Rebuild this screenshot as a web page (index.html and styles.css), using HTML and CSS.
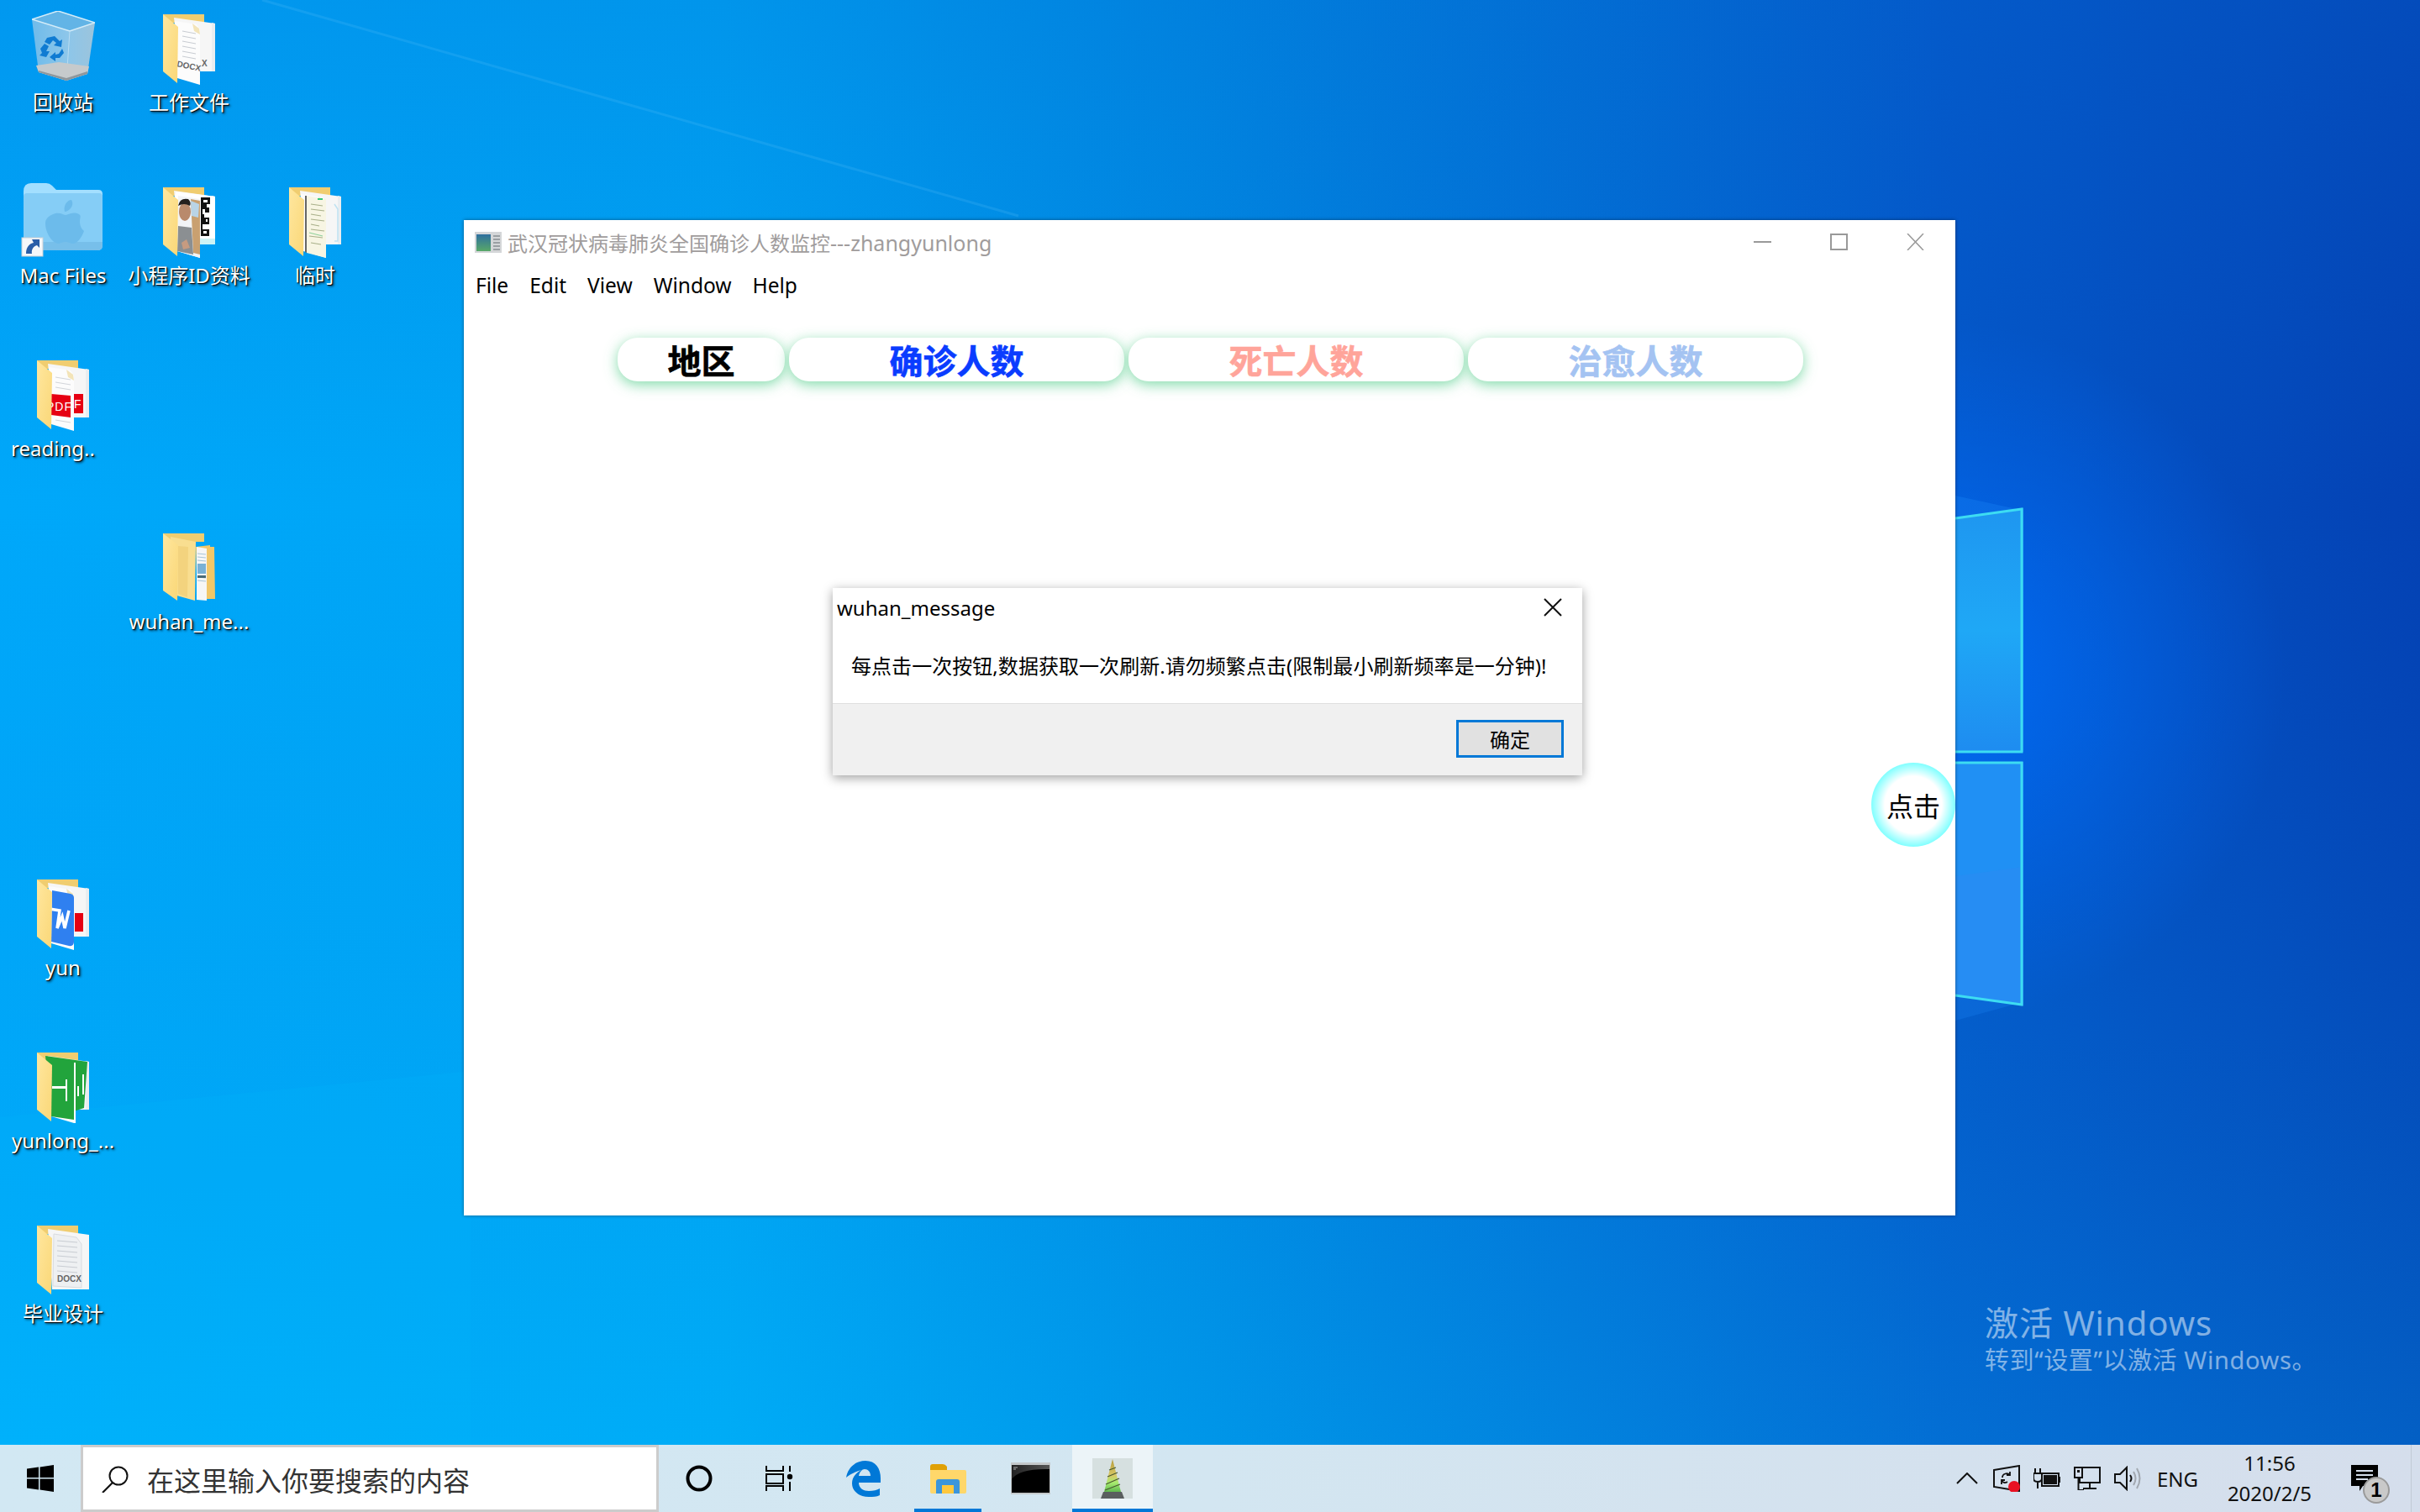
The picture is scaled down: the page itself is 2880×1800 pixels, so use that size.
FILE: index.html
```html
<!DOCTYPE html>
<html>
<head>
    <title>Desktop</title>
    <link rel="stylesheet" href="styles.css">
</head>
<body>
    <!-- shared folder parts -->
    <svg class="defs" width="0" height="0">
        <defs>
            <linearGradient id="flap" x1="0" y1="0" x2="1" y2="1">
                <stop offset="0" stop-color="#ffe79f"/>
                <stop offset="1" stop-color="#fad777"/>
            </linearGradient>
            <linearGradient id="binBody" x1="0" y1="0" x2="1" y2="0">
                <stop offset="0" stop-color="#6fbbea"/>
                <stop offset="0.55" stop-color="#8cc6ea"/>
                <stop offset="1" stop-color="#9cc4dc"/>
            </linearGradient>
            <linearGradient id="consoleFill" x1="0" y1="0" x2="1" y2="0">
                <stop offset="0" stop-color="#222"/>
                <stop offset="1" stop-color="#555"/>
            </linearGradient>
            <linearGradient id="coneFill" x1="0" y1="0" x2="0" y2="1">
                <stop offset="0" stop-color="#b59a3a"/>
                <stop offset="0.5" stop-color="#d8c865"/>
                <stop offset="0.72" stop-color="#a8ec70"/>
                <stop offset="1" stop-color="#5fb850"/>
            </linearGradient>
            <linearGradient id="titleChart" x1="0" y1="0" x2="0" y2="1">
                <stop offset="0" stop-color="#2f6f9f"/>
                <stop offset="1" stop-color="#58a868"/>
            </linearGradient>
            <symbol id="folderBack" viewBox="0 0 62 84">
                <path d="M0 0H49V10H0Z" fill="#f0cd70"/>
                <path d="M13 4L62 11V68L20 68Z" fill="#f6f6f6"/>
                <path d="M62 11V68H58V10Z" fill="#e9edf0"/>
                <path d="M14 8L40 12L44 18V84L17 76Z" fill="#fcfcfc"/>
                <path d="M35 11L43 17L44 24L37 20Z" fill="#f3e4b8"/>
            </symbol>
            <symbol id="folderFlap" viewBox="0 0 62 84">
                <path d="M0 0L18 15L17 82L0 68Z" fill="url(#flap)"/>
            </symbol>
        </defs>
    </svg>

    <div class="desktop">
        <div class="screen">
            <svg class="wallpaper" viewBox="0 0 2880 1720" preserveAspectRatio="none">
                <defs>
                    <linearGradient id="wallBase" x1="0" y1="0" x2="1" y2="0">
                        <stop offset="0" stop-color="#00a8fa"/>
                        <stop offset="0.3" stop-color="#00a4f4"/>
                        <stop offset="0.5" stop-color="#0088e2"/>
                        <stop offset="0.8" stop-color="#0456c8"/>
                        <stop offset="1" stop-color="#0442b4"/>
                    </linearGradient>
                    <linearGradient id="wallShade" x1="0" y1="0" x2="0" y2="1">
                        <stop offset="0" stop-color="#0468d0" stop-opacity="0.25"/>
                        <stop offset="0.35" stop-color="#0468d0" stop-opacity="0"/>
                        <stop offset="1" stop-color="#00c8ff" stop-opacity="0.22"/>
                    </linearGradient>
                    <radialGradient id="wallGlow" cx="2300" cy="800" r="420" gradientUnits="userSpaceOnUse">
                        <stop offset="0" stop-color="#0070ff" stop-opacity="0.8"/>
                        <stop offset="1" stop-color="#0070ff" stop-opacity="0"/>
                    </radialGradient>
                    <linearGradient id="paneTop" x1="0" y1="0" x2="0" y2="1">
                        <stop offset="0" stop-color="#1e96f0"/>
                        <stop offset="0.5" stop-color="#1fa8f6"/>
                        <stop offset="1" stop-color="#1e8cf0"/>
                    </linearGradient>
                </defs>
                <rect width="2880" height="1720" fill="url(#wallBase)"/>
                <rect width="2880" height="1720" fill="url(#wallShade)"/>
                <rect width="2880" height="1720" fill="url(#wallGlow)"/>
                <path d="M312 0L1212 257" stroke="#7fd4ff" stroke-width="3" opacity="0.14"/>
                <path d="M0 1330L560 1275V1720H0Z" fill="#00c0ff" opacity="0.1"/>
                <path d="M2327 590L2400 606L2327 617Z" fill="#1a88f8" opacity="0.3"/>
                <path d="M2327 1185L2400 1195L2327 1215Z" fill="#1a88f8" opacity="0.25"/>
                <path d="M2327 617L2408 605V895H2327Z" fill="url(#paneTop)"/>
                <path d="M2327 907H2408V1197L2327 1185Z" fill="#2090f4"/>
                <path d="M2327 1043L2408 1032V1197L2327 1185Z" fill="#2a8cf2" opacity="0.7"/>
                <path d="M2327 617L2406 606V895H2327M2327 908H2406V1196L2327 1185" fill="none" stroke="#3ddcf2" stroke-width="3"/>
            </svg>

            <div class="icons">
                <div class="icon-item">
                    <svg class="bin" viewBox="0 0 75 84" width="75" height="84">
                        <path d="M0 10L31 0L75 14L66 75L41 83L8 73Z" fill="url(#binBody)"/>
                        <path d="M0 10L31 0L75 14L45 24Z" fill="#62b4e6"/>
                        <path d="M0 10L31 0L75 14L45 24Z" fill="none" stroke="#d4ecf8" stroke-width="1.5"/>
                        <path d="M45 24L41 83" stroke="#b8dcf2" stroke-width="1"/>
                        <path d="M5 65L32 61L68 66L66 75L41 83L8 73Z" fill="#c6cacc"/>
                        <path d="M8 71L41 80L66 72L66 75L41 83L8 73Z" fill="#8f979c"/>
                        <path d="M18 32L27 30L33 36L36 34L35 43L26 41L29 38L25 35L21 40L15 37Z" fill="#0f7bd2"/>
                        <path d="M10 45L15 39L20 42L17 48L21 48L17 55L9 53L12 50Z" fill="#0f7bd2"/>
                        <path d="M36 45L38 50L33 56L28 56V60L21 55L28 49V52L32 51Z" fill="#0f7bd2"/>
                    </svg>
                    <span class="icon-label">回收站</span>
                </div>
                <div class="icon-item">
                    <svg class="folder" viewBox="0 0 62 84" width="62" height="84">
                        <use href="#folderBack"/>
                        <path d="M23 20L39 23M23 26L39 29M23 32L39 35M23 38L39 41M23 44L39 47M23 50L39 53" stroke="#c8ccd2" stroke-width="1"/>
                        <text x="16" y="62" class="doc-tag" transform="rotate(12 16 62)">DOCX</text>
                        <text x="46" y="62" class="doc-tag">X</text>
                        <use href="#folderFlap"/>
                    </svg>
                    <span class="icon-label">工作文件</span>
                </div>
                <div class="icon-item cell-blank"></div>

                <div class="icon-item">
                    <svg class="mac-folder" viewBox="0 0 100 91" width="100" height="91">
                        <path d="M3 10Q3 0 12 0H30Q34 0 37 3L42 8H92Q97 8 97 13V20H3Z" fill="#a3dfff"/>
                        <path d="M3 16Q3 12 7 12H93Q97 12 97 16V74Q97 80 91 80H9Q3 80 3 74Z" fill="#85cdf6"/>
                        <path d="M3 70H97V74Q97 80 91 80H9Q3 80 3 74Z" fill="#77bfea"/>
                        <path d="M52 34C58 33 64 26 60 20C55 20 50 27 52 34ZM36 38C45 33 50 38 53 38C56 38 61 33 69 37C72 39 70 41 70 46C70 53 74 56 75 57C72 65 67 72 62 72C58 72 57 70 53 70C49 70 47 72 44 72C35 70 29 57 29 48C29 43 32 40 36 38Z" fill="#6cbbeb"/>
                        <rect x="1" y="65" width="25" height="22" fill="#f5f7f9" stroke="#c8d0d6"/>
                        <path d="M6 84C6 76 10 72 15 71L13 67H22V77L19 74C15 75 12 79 13 84Z" fill="#2a5ea8"/>
                    </svg>
                    <span class="icon-label">Mac Files</span>
                </div>
                <div class="icon-item">
                    <svg class="folder" viewBox="0 0 62 84" width="62" height="84">
                        <use href="#folderBack"/>
                        <path d="M15 5L62 11V68L46 68V60L15 60Z" fill="#ffffff"/>
                        <path d="M44 61H62V68H44Z" fill="#cdf3f6"/>
                        <path d="M45 12H56V20H52V24H55V30H49V36H55V44H47V50H55V58H45Z" fill="#111"/>
                        <path d="M48 15H53V18H48ZM47 26H50V32H47ZM51 38H53V41H51ZM48 52H52V55H48Z" fill="#fff"/>
                        <path d="M18 10L44 14V84L17 76Z" fill="#f2f4f6"/>
                        <path d="M33 14L44 16V80L36 78Z" fill="#c9a070"/>
                        <path d="M33 16L43 20L42 36L34 34Z" fill="#b9d4e6"/>
                        <path d="M18 46L34 48L36 80L17 76Z" fill="#8b8f92"/>
                        <ellipse cx="26" cy="29" rx="7" ry="11" fill="#b98a6c"/>
                        <path d="M18 22Q20 12 30 14Q34 18 32 22Q25 18 18 22Z" fill="#24201e"/>
                        <path d="M22 66L28 62L32 72L24 74Z" fill="#c79b80"/>
                        <use href="#folderFlap"/>
                    </svg>
                    <span class="icon-label">小程序ID资料</span>
                </div>
                <div class="icon-item">
                    <svg class="folder" viewBox="0 0 62 84" width="62" height="84">
                        <use href="#folderBack"/>
                        <path d="M21 10L44 14V84L21 78Z" fill="#f7f5e3"/>
                        <path d="M19 10L21 10V78L19 77Z" fill="#666"/>
                        <path d="M34 13H40V15H34Z" fill="#35c878"/>
                        <path d="M26 20L40 22M26 26L42 28M26 32L38 34M26 38L42 40M26 44L36 46M26 50L42 52M24 58L40 60M26 66L38 68" stroke="#a9b08a" stroke-width="1.2"/>
                        <path d="M24 54L40 58" stroke="#8ed09a" stroke-width="1.2"/>
                        <path d="M54 20L58 26V64H54" fill="none" stroke="#bfe2f2" stroke-width="1.5"/>
                        <use href="#folderFlap"/>
                    </svg>
                    <span class="icon-label">临时</span>
                </div>

                <div class="icon-item">
                    <svg class="folder" viewBox="0 0 62 84" width="62" height="84">
                        <use href="#folderBack"/>
                        <path d="M17 40L40 42V68L17 65Z" fill="#e60012"/>
                        <path d="M44 40H55V63H44Z" fill="#e60012"/>
                        <path d="M22 20L40 23M22 26L40 29M22 32L40 35M22 71L40 74" stroke="#d2d5da" stroke-width="1"/>
                        <text x="11" y="60" class="pdf-tag">PDF</text>
                        <text x="44" y="57" class="pdf-tag">F</text>
                        <use href="#folderFlap"/>
                    </svg>
                    <span class="icon-label label-clipped">reading..</span>
                </div>
                <div class="icon-item cell-blank"></div>
                <div class="icon-item cell-blank"></div>

                <div class="icon-item cell-blank"></div>
                <div class="icon-item">
                    <svg class="folder" viewBox="0 0 62 84" width="62" height="84">
                        <path d="M0 0H49V10H0Z" fill="#f0cd70"/>
                        <path d="M39 16L56 14V16H61L62 78H41Z" fill="#f2c768"/>
                        <path d="M40 16L52 18V80L40 79Z" fill="#f6f6f6"/>
                        <path d="M41 24L51 25M41 28L51 29M41 32L51 33M41 52L51 53M41 56L51 57" stroke="#a9c4d6" stroke-width="1.2"/>
                        <path d="M41 36H51V48H41Z" fill="#7ab1d6"/>
                        <path d="M41 50H51V53H41Z" fill="#4a6a78"/>
                        <path d="M9 4L39 10L38 80L9 72Z" fill="#f9de90"/>
                        <path d="M18 15L30 16L29 76L18 72Z" fill="#f3d37e"/>
                        <path d="M0 0L18 14L17 80L0 68Z" fill="url(#flap)"/>
                    </svg>
                    <span class="icon-label">wuhan_me...</span>
                </div>
                <div class="icon-item cell-blank"></div>

                <div class="icon-item cell-blank"></div>
                <div class="icon-item cell-blank"></div>
                <div class="icon-item cell-blank"></div>

                <div class="icon-item">
                    <svg class="folder" viewBox="0 0 62 84" width="62" height="84">
                        <use href="#folderBack"/>
                        <path d="M45 40H55V62H45Z" fill="#e60012"/>
                        <path d="M18 13L40 17Q44 18 44 22V74Q44 80 38 79L17 74Z" fill="#2f80f0"/>
                        <path d="M15 35L27 37L24 58L30 44L33 58L38 37" fill="none" stroke="#fff" stroke-width="3.5"/>
                        <use href="#folderFlap"/>
                    </svg>
                    <span class="icon-label">yun</span>
                </div>
                <div class="icon-item cell-blank"></div>
                <div class="icon-item cell-blank"></div>

                <div class="icon-item">
                    <svg class="folder" viewBox="0 0 62 84" width="62" height="84">
                        <use href="#folderBack"/>
                        <path d="M10 4L60 11L56 66L44 70V80L17 76Z" fill="#22a43c"/>
                        <path d="M44 12H46V84H44Z" fill="#fff"/>
                        <path d="M18 40H34V43H18ZM34 32H36V58H34ZM48 40H50V52H48ZM54 26H56V50H54Z" fill="#fff"/>
                        <use href="#folderFlap"/>
                    </svg>
                    <span class="icon-label">yunlong_...</span>
                </div>
                <div class="icon-item cell-blank"></div>
                <div class="icon-item cell-blank"></div>

                <div class="icon-item">
                    <svg class="folder" viewBox="0 0 62 84" width="62" height="84">
                        <path d="M0 0H49V10H0Z" fill="#f0cd70"/>
                        <path d="M13 4L62 11V76H18Z" fill="#f6f6f6"/>
                        <path d="M20 10L47 14L53 22V74L19 72Z" fill="#eef0f2" stroke="#d9dce0"/>
                        <path d="M24 18L48 20M24 24L48 26M24 30L48 32M24 36L48 38M24 42L48 44M24 48L48 50M24 54L48 56" stroke="#c8ccd2" stroke-width="1"/>
                        <text x="24" y="67" class="doc-tag">DOCX</text>
                        <use href="#folderFlap"/>
                    </svg>
                    <span class="icon-label">毕业设计</span>
                </div>
            </div>

            <div class="watermark">
                <div class="watermark-title">激活 Windows</div>
                <div class="watermark-sub">转到“设置”以激活 Windows。</div>
            </div>

            <div class="window">
                <div class="titlebar">
                    <svg class="title-icon" viewBox="0 0 32 25" width="32" height="25">
                        <rect width="32" height="25" fill="#d4d6d8"/>
                        <rect x="2" y="3" width="17" height="20" fill="url(#titleChart)"/>
                        <path d="M22 5H30M22 9H30M22 13H30M22 17H30M22 21H30" stroke="#9a9fa3" stroke-width="2"/>
                    </svg>
                    <span class="title-text">武汉冠状病毒肺炎全国确诊人数监控<span class="title-latin">---zhangyunlong</span></span>
                    <div class="win-controls">
                        <svg viewBox="0 0 21 20" width="21" height="20"><path d="M0 10H21" stroke="#999" stroke-width="2"/></svg>
                        <svg viewBox="0 0 21 20" width="21" height="20"><rect x="1" y="1" width="19" height="18" fill="none" stroke="#999" stroke-width="2"/></svg>
                        <svg viewBox="0 0 21 20" width="21" height="20"><path d="M1 0L20 20M20 0L1 20" stroke="#999" stroke-width="1.5"/></svg>
                    </div>
                </div>
                <div class="menubar">
                    <span>File</span>
                    <span>Edit</span>
                    <span>View</span>
                    <span>Window</span>
                    <span>Help</span>
                </div>
                <div class="tabs">
                    <div class="tab tab-area">地区</div>
                    <div class="tab tab-wide tab-confirmed">确诊人数</div>
                    <div class="tab tab-wide tab-dead">死亡人数</div>
                    <div class="tab tab-wide tab-cured">治愈人数</div>
                </div>
                <div class="round-btn">点击</div>
            </div>

            <div class="dialog">
                <div class="dialog-main">
                    <div class="dialog-title">
                        <span>wuhan_message</span>
                        <svg viewBox="0 0 22 22" width="22" height="22"><path d="M1 1L21 21M21 1L1 21" stroke="#111" stroke-width="2"/></svg>
                    </div>
                    <div class="dialog-msg">每点击一次按钮,数据获取一次刷新.请勿频繁点击(限制最小刷新频率是一分钟)!</div>
                </div>
                <div class="dialog-foot">
                    <div class="dialog-ok">确定</div>
                </div>
            </div>
        </div>

        <div class="taskbar">
            <div class="start">
                <svg viewBox="0 0 32 32" width="32" height="32">
                    <path d="M0 4.5L14 2.6V15H0ZM15.5 2.4L32 0V15H15.5ZM0 16.5H14V29.4L0 27.5ZM15.5 16.5H32V32L15.5 29.6Z" fill="#000"/>
                </svg>
            </div>
            <div class="search">
                <svg viewBox="0 0 32 32" width="32" height="32">
                    <circle cx="20" cy="12" r="10.5" fill="none" stroke="#111" stroke-width="2"/>
                    <path d="M13 20L1 32" stroke="#111" stroke-width="2.2"/>
                </svg>
                <span>在这里输入你要搜索的内容</span>
            </div>
            <div class="task-cell">
                <svg viewBox="0 0 32 32" width="32" height="32"><circle cx="16" cy="16" r="13.5" fill="none" stroke="#000" stroke-width="4"/></svg>
            </div>
            <div class="task-cell">
                <svg viewBox="0 0 34 30" width="34" height="30">
                    <path d="M1 0V6H21V0M1 30V24H21V30" fill="none" stroke="#000" stroke-width="2"/>
                    <rect x="1" y="10" width="20" height="11" fill="none" stroke="#000" stroke-width="2"/>
                    <path d="M29 0V7M29 19V30" stroke="#000" stroke-width="2"/>
                    <circle cx="29" cy="13" r="3.2" fill="#000"/>
                </svg>
            </div>
            <div class="task-cell cell-edge">
                <svg viewBox="0 0 42 43" width="42" height="43">
                    <path fill-rule="evenodd" fill="#0078d7" d="M0 20C2 8 11 0 23 0C35 0 41 9 41 21V26H15C15 33 21 36 27 36C32 36 37 35 40 33V41C36 43 32 43 27 43C15 43 7 36 7 27C7 20 11 15 18 11C11 13 4 16 0 20ZM15 18H29C29 13 26 10 22 10C19 10 16 13 15 18Z"/>
                </svg>
            </div>
            <div class="task-cell is-open">
                <svg viewBox="0 0 43 35" width="43" height="35">
                    <path d="M0 3Q0 0 3 0H15Q18 0 20 3V8H0Z" fill="#e0a106"/>
                    <path d="M0 7H41Q43 7 43 9V33Q43 35 41 35H2Q0 35 0 33Z" fill="#ffd76a"/>
                    <path d="M7 35V21Q7 18 10 18H32Q35 18 35 21V35H28V25H14V35Z" fill="#3b96dc"/>
                    <rect x="14" y="25" width="14" height="10" fill="#ffc83d"/>
                </svg>
            </div>
            <div class="task-cell cell-console">
                <svg viewBox="0 0 47 38" width="47" height="38">
                    <rect width="47" height="38" fill="#c4c8ca"/>
                    <rect x="1" y="3" width="45" height="33" fill="url(#consoleFill)"/>
                    <path d="M1 20Q10 7 46 8V36H1Z" fill="#000"/>
                    <path d="M3 6H8M3 8H6" stroke="#aaa" stroke-width="1"/>
                </svg>
            </div>
            <div class="task-cell is-open is-active">
                <svg viewBox="0 0 48 48" width="48" height="48">
                    <rect width="48" height="48" fill="#d6e0e0"/>
                    <path d="M24 1L34 40H14Z" fill="url(#coneFill)"/>
                    <path d="M20 14L28 11M18 22L30 17M16 31L32 24M15 38L33 31" stroke="#4a5a30" stroke-width="1.3"/>
                    <path d="M13 40H35L38 48H10Z" fill="#5a5f5f"/>
                </svg>
            </div>
            <div class="tray">
                <svg viewBox="0 0 26 14" width="26" height="14"><path d="M1 13L13 1L25 13" fill="none" stroke="#111" stroke-width="2"/></svg>
                <svg class="tray-sync" viewBox="0 0 32 32" width="32" height="32">
                    <path d="M1 6L31 1V31L1 26Z" fill="none" stroke="#111" stroke-width="2"/>
                    <path d="M11 15C11 10 17 9 20 12M20 8V12H16M17 20C14 22 11 21 10 18M10 23V18H14" fill="none" stroke="#111" stroke-width="1.8"/>
                    <circle cx="25" cy="26" r="7" fill="#e81123"/>
                </svg>
                <svg viewBox="0 0 32 24" width="32" height="24">
                    <path d="M2 0V6M8 0V6M0 6H10V12Q10 16 5 16Q0 16 0 12ZM5 16V24" fill="none" stroke="#111" stroke-width="2"/>
                    <rect x="10" y="6" width="20" height="15" fill="none" stroke="#111" stroke-width="2"/>
                    <rect x="12" y="8" width="16" height="11" fill="#111"/>
                    <rect x="30" y="10" width="2" height="7" fill="#111"/>
                </svg>
                <svg viewBox="0 0 32 28" width="32" height="28">
                    <rect x="7" y="1" width="24" height="18" fill="none" stroke="#111" stroke-width="2"/>
                    <path d="M19 19V25M11 26H27" stroke="#111" stroke-width="2"/>
                    <rect x="1" y="1" width="9" height="12" fill="#d5deec" stroke="#111" stroke-width="2"/>
                    <path d="M5.500 13V28H12" fill="none" stroke="#111" stroke-width="2"/>
                    <rect x="4" y="4" width="3" height="3" fill="#111"/>
                </svg>
                <svg viewBox="0 0 32 30" width="32" height="30">
                    <path d="M1 10H7L15 2V28L7 20H1Z" fill="none" stroke="#111" stroke-width="2"/>
                    <path d="M19 11Q22 15 19 19" fill="none" stroke="#111" stroke-width="2"/>
                    <path d="M23 7Q28 15 23 23M27 3Q34 15 27 27" fill="none" stroke="#a2a8b0" stroke-width="2"/>
                </svg>
                <span class="tray-lang">ENG</span>
                <div class="clock">
                    <span>11:56</span>
                    <span>2020/2/5</span>
                </div>
                <div class="notify">
                    <svg viewBox="0 0 32 32" width="32" height="32">
                        <path d="M0 0H32V25H14L10 31V25H0Z" fill="#000"/>
                        <path d="M6 7H26M6 12H26M6 17H20" stroke="#d5deec" stroke-width="2"/>
                    </svg>
                    <span class="notify-badge">1</span>
                </div>
                <div class="peek"></div>
            </div>
        </div>
    </div>
</body>
</html>
```

FILE: styles.css
```css
html, body {
    margin: 0;
    padding: 0;
}

body {
    font-family: "Noto Sans", "Noto Sans CJK SC", sans-serif;
    overflow: hidden;
}

.defs {
    position: absolute;
}

.desktop {
    width: 2880px;
    height: 1800px;
    display: flex;
    flex-direction: column;
    overflow: hidden;
}

.screen {
    position: relative;
    height: 1720px;
}

.wallpaper {
    position: absolute;
    top: 0;
    left: 0;
    width: 2880px;
    height: 1720px;
}

/* desktop icons */
.icons {
    position: relative;
    display: grid;
    grid-template-columns: repeat(3, 150px);
    grid-auto-rows: 206px;
    width: 450px;
}

.icon-item {
    display: flex;
    flex-direction: column;
    align-items: center;
    padding-top: 17px;
}

.icon-item svg {
    flex: none;
}

.bin {
    margin-top: -4px;
    margin-bottom: 4px;
}

.mac-folder {
    margin-top: -5px;
    margin-bottom: -2px;
}

.icon-label {
    margin-top: 5px;
    font-size: 24px;
    line-height: 32px;
    color: #fff;
    white-space: nowrap;
    text-shadow: 1px 1px 1px #000, 2px 2px 3px rgba(0, 0, 0, 0.7);
}

.label-clipped {
    padding-right: 24px;
}

.doc-tag {
    font-family: "Liberation Sans", sans-serif;
    font-size: 10px;
    font-weight: bold;
    fill: #666;
}

.pdf-tag {
    font-family: "Liberation Sans", sans-serif;
    font-size: 14px;
    letter-spacing: 1px;
    fill: #fff;
}

/* activation note */
.watermark {
    position: absolute;
    left: 2362px;
    top: 1550px;
    color: rgba(255, 255, 255, 0.5);
}

.watermark-title {
    font-size: 40px;
    line-height: 50px;
    letter-spacing: 1px;
}

.watermark-sub {
    font-size: 29px;
    line-height: 38px;
    letter-spacing: 0.6px;
}

/* main window */
.window {
    position: absolute;
    left: 552px;
    top: 262px;
    width: 1775px;
    height: 1185px;
    background: #fff;
    box-shadow: 0 0 4px rgba(0, 0, 0, 0.45);
}

.titlebar {
    display: flex;
    align-items: center;
    height: 52px;
    padding: 0 0 4px 13px;
}

.title-icon {
    margin-right: 7px;
}

.title-text {
    font-size: 24px;
    color: #a09c9c;
}

.title-latin {
    font-size: 25px;
}

.win-controls {
    display: flex;
    gap: 70px;
    margin-left: auto;
    margin-right: 37px;
}

.menubar {
    display: flex;
    gap: 25px;
    height: 42px;
    padding-left: 14px;
    align-items: center;
    font-size: 24.5px;
    color: #000;
}

.tabs {
    display: flex;
    gap: 5px;
    margin-top: 42px;
    padding-left: 183px;
}

.tab {
    width: 199px;
    height: 52px;
    border-radius: 24px;
    background: #fff;
    box-shadow: 0 4px 16px rgba(100, 210, 150, 0.8);
    font-size: 40px;
    font-weight: bold;
    line-height: 56px;
    text-align: center;
    -webkit-text-stroke: 0.6px currentColor;
}

.tab-wide {
    width: 399px;
}

.tab-area {
    color: #000;
}

.tab-confirmed {
    color: #0a3cff;
}

.tab-dead {
    color: #ffa49a;
}

.tab-cured {
    color: #a4c3f2;
}

.round-btn {
    position: absolute;
    right: 0;
    top: 646px;
    width: 100px;
    height: 100px;
    border-radius: 50%;
    background: radial-gradient(circle closest-side, #fff 68%, #80ffff 100%);
    font-size: 32px;
    line-height: 103px;
    text-align: center;
    color: #000;
}

/* message box */
.dialog {
    position: absolute;
    left: 991px;
    top: 700px;
    width: 892px;
    height: 223px;
    display: flex;
    flex-direction: column;
    box-shadow: 0 3px 12px rgba(0, 0, 0, 0.38);
}

.dialog-main {
    background: #fff;
    height: 138px;
    border-bottom: 1px solid #dfdfdf;
    box-sizing: border-box;
}

.dialog-title {
    display: flex;
    align-items: center;
    justify-content: space-between;
    height: 46px;
    padding: 0 24px 0 5px;
    font-size: 24px;
    color: #000;
}

.dialog-msg {
    padding: 29px 0 0 22px;
    font-size: 24px;
    letter-spacing: 0.05px;
    line-height: 36px;
    color: #000;
    white-space: nowrap;
}

.dialog-foot {
    flex: 1;
    display: flex;
    justify-content: flex-end;
    padding: 19px 22px 0 0;
    background: #f0f0f0;
}

.dialog-ok {
    box-sizing: border-box;
    width: 128px;
    height: 45px;
    border: 3px solid #0078d7;
    background: #e1e1e1;
    font-size: 24px;
    line-height: 41px;
    text-align: center;
    color: #000;
}

/* taskbar */
.taskbar {
    display: flex;
    height: 80px;
    background: linear-gradient(to right, #d2e8f3, #d3e6f1 50%, #d5deec);
}

.start {
    display: flex;
    align-items: center;
    justify-content: center;
    width: 96px;
    flex: none;
}

.search {
    box-sizing: border-box;
    display: flex;
    align-items: center;
    gap: 22px;
    width: 688px;
    height: 80px;
    padding: 2px 0 0 22px;
    flex: none;
    background: #fff;
    border: 3px solid #ccc;
    font-size: 32px;
    color: #333;
}

.task-cell {
    position: relative;
    display: flex;
    align-items: center;
    justify-content: center;
    width: 96px;
    flex: none;
}

.cell-edge {
    width: 104px;
}

.cell-console {
    width: 100px;
}

.is-open::after {
    content: "";
    position: absolute;
    left: 8px;
    right: 8px;
    bottom: 0;
    height: 4px;
    background: #0078d7;
}

.is-active {
    background: #ecf4f8;
}

.is-active::after {
    left: 0;
    right: 0;
}

.tray {
    display: flex;
    align-items: center;
    gap: 16px;
    margin-left: auto;
    color: #111;
}

.tray-sync {
    margin-left: 2px;
}

.tray-lang {
    font-size: 24px;
    margin-left: 3px;
}

.clock {
    display: flex;
    flex-direction: column;
    align-items: center;
    width: 102px;
    margin-left: 18px;
    font-size: 24px;
    line-height: 36px;
}

.notify {
    position: relative;
    width: 32px;
    height: 32px;
    margin-left: 30px;
    margin-right: 23px;
}

.notify-badge {
    position: absolute;
    left: 14px;
    top: 14px;
    box-sizing: border-box;
    width: 32px;
    height: 32px;
    border-radius: 50%;
    border: 2px solid #9a9a9a;
    background: #c9c9c9;
    font-family: "Liberation Sans", sans-serif;
    font-size: 24px;
    font-weight: bold;
    line-height: 28px;
    text-align: center;
    color: #000;
}

.peek {
    width: 1px;
    height: 80px;
    margin-right: 10px;
    background: #c2cad6;
}
```
